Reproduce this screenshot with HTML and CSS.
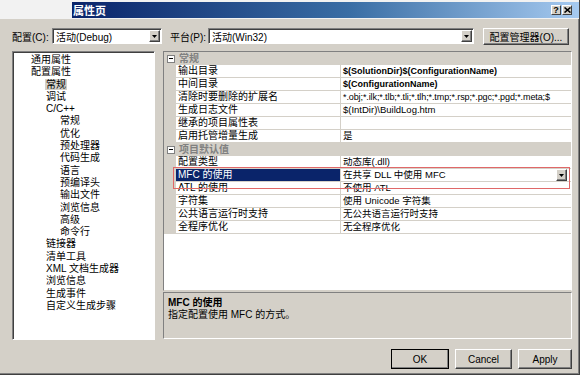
FILE: index.html
```html
<!DOCTYPE html>
<html lang="zh-CN">
<head>
    <meta charset="UTF-8">
    <title>属性页</title>
    <link rel="stylesheet" href="styles.css">
</head>
<body>
    <div class="window">
        <div class="titlebar">
            <div class="title-blank"></div>
            <div class="title-band">
                <span class="title-text">属性页</span>
                <div class="caption-buttons">
                    <span class="cap-btn cap-help">?</span>
                    <span class="cap-btn">
                        <svg width="7" height="6" viewBox="0 0 7 6"><path d="M0.5 0.5L6.5 5.5M6.5 0.5L0.5 5.5" stroke="#000" stroke-width="1.6"/></svg>
                    </span>
                </div>
            </div>
        </div>

        <div class="toolbar">
            <span class="tb-label">配置(C):</span>
            <div class="combo combo-config">
                <span class="combo-text">活动(Debug)</span>
                <span class="drop-btn"><svg width="5" height="3" viewBox="0 0 5 3"><path d="M0 0h5L2.5 3z"/></svg></span>
            </div>
            <span class="tb-label tb-platform">平台(P):</span>
            <div class="combo combo-platform">
                <span class="combo-text">活动(Win32)</span>
                <span class="drop-btn"><svg width="5" height="3" viewBox="0 0 5 3"><path d="M0 0h5L2.5 3z"/></svg></span>
            </div>
            <button class="btn btn-manager">配置管理器(O)...</button>
        </div>

        <div class="main">
            <div class="tree">
                <div class="node lv0">通用属性</div>
                <div class="node lv0">配置属性</div>
                <div class="node lv1"><span class="selected">常规</span></div>
                <div class="node lv1">调试</div>
                <div class="node lv1">C/C++</div>
                <div class="node lv2">常规</div>
                <div class="node lv2">优化</div>
                <div class="node lv2">预处理器</div>
                <div class="node lv2">代码生成</div>
                <div class="node lv2">语言</div>
                <div class="node lv2">预编译头</div>
                <div class="node lv2">输出文件</div>
                <div class="node lv2">浏览信息</div>
                <div class="node lv2">高级</div>
                <div class="node lv2">命令行</div>
                <div class="node lv1">链接器</div>
                <div class="node lv1">清单工具</div>
                <div class="node lv1">XML 文档生成器</div>
                <div class="node lv1">浏览信息</div>
                <div class="node lv1">生成事件</div>
                <div class="node lv1">自定义生成步骤</div>
            </div>

            <div class="right">
                <div class="grid">
                    <div class="row cat"><span class="toggle"></span><span class="cat-name">常规</span></div>
                    <div class="row"><span class="strip"></span><span class="name">输出目录</span><span class="value bold">$(SolutionDir)$(ConfigurationName)</span></div>
                    <div class="row"><span class="strip"></span><span class="name">中间目录</span><span class="value bold">$(ConfigurationName)</span></div>
                    <div class="row"><span class="strip"></span><span class="name">清除时要删除的扩展名</span><span class="value tight">*.obj;*.ilk;*.tlb;*.tli;*.tlh;*.tmp;*.rsp;*.pgc;*.pgd;*.meta;$</span></div>
                    <div class="row"><span class="strip"></span><span class="name">生成日志文件</span><span class="value">$(IntDir)\BuildLog.htm</span></div>
                    <div class="row"><span class="strip"></span><span class="name">继承的项目属性表</span><span class="value"></span></div>
                    <div class="row"><span class="strip"></span><span class="name">启用托管增量生成</span><span class="value">是</span></div>
                    <div class="row cat"><span class="toggle"></span><span class="cat-name">项目默认值</span></div>
                    <div class="row"><span class="strip"></span><span class="name">配置类型</span><span class="value">动态库(.dll)</span></div>
                    <div class="row active"><span class="strip"></span><span class="name">MFC 的使用</span><span class="value">在共享 DLL 中使用 MFC<span class="drop-btn cell-drop"><svg width="5" height="3" viewBox="0 0 5 3"><path d="M0 0h5L2.5 3z"/></svg></span></span></div>
                    <div class="row"><span class="strip"></span><span class="name">ATL 的使用</span><span class="value">不使用 ATL</span></div>
                    <div class="row"><span class="strip"></span><span class="name">字符集</span><span class="value">使用 Unicode 字符集</span></div>
                    <div class="row"><span class="strip"></span><span class="name">公共语言运行时支持</span><span class="value">无公共语言运行时支持</span></div>
                    <div class="row"><span class="strip"></span><span class="name">全程序优化</span><span class="value">无全程序优化</span></div>
                    <div class="mark-box"></div>
                </div>
                <div class="desc">
                    <div class="desc-title">MFC 的使用</div>
                    <div>指定配置使用 MFC 的方式。</div>
                </div>
            </div>
        </div>

        <div class="footer">
            <button class="btn btn-default">OK</button>
            <button class="btn btn-cancel">Cancel</button>
            <button class="btn btn-apply">Apply</button>
        </div>
    </div>
</body>
</html>
```

FILE: styles.css
```css
body {
    margin: 0;
    font-family: "Liberation Sans", "Noto Sans CJK SC", sans-serif;
    font-size: 10px;
    color: #000;
}
.window {
    width: 580px;
    height: 375px;
    box-sizing: border-box;
    background-color: #d4d0c8;
    border-right: 1px solid #404040;
    border-bottom: 1px solid #404040;
    box-shadow: inset -1px -1px #808080;
    overflow: hidden;
}

/* title bar */
.titlebar {
    display: flex;
    height: 19px;
    background-color: #f2f2f2;
}
.title-blank {
    width: 72px;
}
.title-band {
    flex: 1;
    display: flex;
    align-items: center;
    justify-content: space-between;
    height: 16px;
    margin-top: 2px;
    background: linear-gradient(90deg, #0a246a, #3a6ea5 55%, #a6caf0);
}
.title-text {
    color: #fff;
    font-weight: bold;
    font-size: 11px;
    padding-left: 1px;
}
.caption-buttons {
    display: flex;
    gap: 1px;
    margin-right: 7px;
}
.cap-btn {
    display: flex;
    align-items: center;
    justify-content: center;
    width: 10px;
    height: 10px;
    box-sizing: border-box;
    background-color: #d4d0c8;
    border: 1px solid;
    border-color: #fff #404040 #404040 #fff;
    font-weight: bold;
    font-size: 9px;
    line-height: 1;
}

/* raised / sunken edges */
.btn, .drop-btn {
    background-color: #d4d0c8;
    border: 1px solid;
    border-color: #fff #404040 #404040 #fff;
    box-shadow: inset -1px -1px #808080;
}
.btn {
    font-family: inherit;
    font-size: 10px;
    color: #000;
    padding: 0;
    box-sizing: border-box;
}
.combo {
    display: flex;
    align-items: center;
    justify-content: space-between;
    height: 16px;
    box-sizing: border-box;
    background-color: #fff;
    border: 1px solid;
    border-color: #808080 #fff #fff #808080;
    box-shadow: inset 1px 1px #404040;
    padding: 0 1px 0 3px;
}
.drop-btn {
    display: flex;
    align-items: center;
    justify-content: center;
    width: 11px;
    height: 12px;
    box-sizing: border-box;
}

/* toolbar */
.toolbar {
    display: flex;
    align-items: center;
    height: 16px;
    margin-top: 9px;
    padding-left: 12px;
}
.tb-label {
    width: 40px;
}
.tb-platform {
    margin-left: 8px;
    width: 38px;
}
.combo-config {
    width: 110px;
}
.combo-platform {
    width: 266px;
}
.btn-manager {
    width: 86px;
    height: 17px;
    margin-left: 9px;
}

/* main area */
.main {
    display: flex;
    gap: 8px;
    margin-top: 7px;
    padding-left: 12px;
}
.tree {
    width: 143px;
    height: 289px;
    box-sizing: border-box;
    background-color: #fff;
    border: 1px solid;
    border-color: #808080 #fff #fff #808080;
    box-shadow: inset 1px 1px #404040;
    padding-top: 2px;
}
.node {
    line-height: 12.3px;
    white-space: nowrap;
}
.lv0 { padding-left: 18px; }
.lv1 { padding-left: 33px; }
.lv2 { padding-left: 47px; }
.selected {
    background-color: #d4d0c8;
    padding: 0 1px;
    margin-left: -1px;
}

.right {
    display: flex;
    flex-direction: column;
    width: 409px;
}
.grid {
    position: relative;
    height: 240px;
    box-sizing: border-box;
    background-color: #fff;
    border: 1px solid;
    border-color: #808080 #fff #d4d0c8 #808080;
    overflow: hidden;
}
.row {
    display: grid;
    grid-template-columns: 12px 165px 1fr;
    height: 13px;
    line-height: 12px;
}
.strip {
    background-color: #d4d0c8;
}
.name, .value {
    border-bottom: 1px solid #d4d0c8;
    white-space: nowrap;
    overflow: hidden;
    padding-left: 2px;
}
.name {
    border-right: 1px solid #d4d0c8;
}
.value {
    font-size: 9.5px;
    position: relative;
}
.value.bold {
    font-weight: bold;
    font-size: 9px;
}
.value.tight {
    font-size: 9px;
    letter-spacing: -0.1px;
}
.row.cat {
    display: flex;
    align-items: center;
    background-color: #d4d0c8;
}
.toggle {
    position: relative;
    width: 8px;
    height: 8px;
    box-sizing: border-box;
    margin-left: 3px;
    background-color: #fff;
    border: 1px solid #808080;
}
.toggle::after {
    content: "";
    position: absolute;
    left: 1px;
    top: 2px;
    width: 4px;
    height: 1px;
    background-color: #000;
}
.cat-name {
    margin-left: 4px;
    color: #808080;
    font-weight: bold;
}
.row.active .name {
    background-color: #0a246a;
    color: #fff;
}
.cell-drop {
    position: absolute;
    right: 4px;
    top: 0;
    height: 12px;
}
.mark-box {
    position: absolute;
    left: 9px;
    top: 115px;
    width: 397px;
    height: 22px;
    box-sizing: border-box;
    border: 1px solid #e06868;
}

.desc {
    height: 47px;
    margin-top: 1px;
    box-sizing: border-box;
    border: 1px solid;
    border-color: #808080 #fff #fff #808080;
    padding: 4px 4px;
    line-height: 12px;
}
.desc-title {
    font-weight: bold;
}

/* dialog buttons */
.footer {
    display: flex;
    justify-content: flex-end;
    gap: 6px;
    margin-top: 9px;
    padding-right: 7px;
}
.footer .btn {
    height: 20px;
}
.btn-default {
    width: 58px;
    outline: 1px solid #000;
    outline-offset: -1px;
}
.btn-cancel {
    width: 57px;
}
.btn-apply {
    width: 54px;
}
```
